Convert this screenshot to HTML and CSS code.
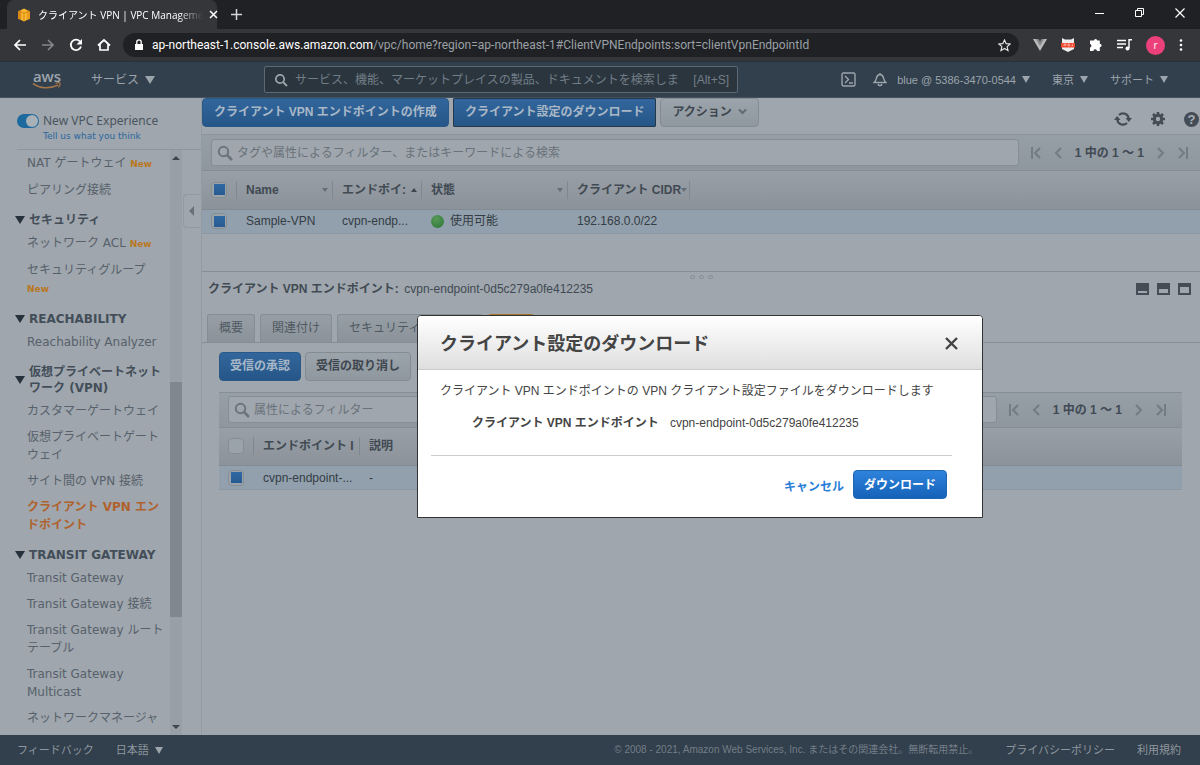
FILE: index.html
```html
<!DOCTYPE html>
<html lang="ja">
<head>
    <meta charset="UTF-8">
    <meta name="viewport" content="width=device-width, initial-scale=1.0">
    <title>クライアント VPN | VPC Management Console</title>
    <link rel="stylesheet" href="styles.css">
</head>
<body>

    <div class="browser">
        <div class="tab-bar">
            <div class="tab">
                <svg class="favicon" width="14" height="14" viewBox="0 0 14 14">
                    <path d="M1 3 4 2v10l-3-1z" fill="#d98a1a"/>
                    <path d="M4 2l3-1.500 3 1.500v10l-3 1.500-3-1.500z" fill="#f9b42d"/>
                    <path d="M10 2l3 1v8l-3 1z" fill="#e79a1e"/>
                    <path d="M1 3.500 7 5l6-1.500M7 5v8.500" stroke="#c9820f" fill="none" stroke-width=".8"/>
                </svg>
                <span class="tab-title">クライアント VPN | VPC Manageme</span>
                <button class="plain" aria-label="タブを閉じる">
                    <svg width="9" height="9" viewBox="0 0 9 9"><path d="M1 1l7 7M8 1l-7 7" stroke="#fff" stroke-width="1.500"/></svg>
                </button>
            </div>
            <button class="plain new-tab" aria-label="新しいタブ">
                <svg width="11" height="11" viewBox="0 0 11 11"><path d="M5.500 0v11M0 5.500h11" stroke="#d5d6d8" stroke-width="1.500"/></svg>
            </button>
            <div class="window-buttons">
                <button class="plain" aria-label="最小化"><svg width="10" height="10" viewBox="0 0 10 10"><path d="M0 5.500h9" stroke="#fff"/></svg></button>
                <button class="plain" aria-label="元に戻す"><svg width="10" height="10" viewBox="0 0 10 10"><path d="M.5 2.500h6v6h-6zM2.500 2.500v-2h6v6h-2" stroke="#fff" fill="none"/></svg></button>
                <button class="plain" aria-label="閉じる"><svg width="10" height="10" viewBox="0 0 10 10"><path d="M.5.5l9 9M9.500.5l-9 9" stroke="#fff" stroke-width="1.200"/></svg></button>
            </div>
        </div>
        <div class="toolbar">
            <button class="plain" aria-label="戻る"><svg width="14" height="12" viewBox="0 0 14 12"><path d="M13 6H2M7 1L2 6l5 5" stroke="#fff" stroke-width="1.700" fill="none"/></svg></button>
            <button class="plain" aria-label="進む"><svg width="14" height="12" viewBox="0 0 14 12"><path d="M1 6h11M7 1l5 5-5 5" stroke="#85868a" stroke-width="1.700" fill="none"/></svg></button>
            <button class="plain" aria-label="再読み込み"><svg width="14" height="14" viewBox="0 0 14 14"><path d="M12 8.500A5.200 5.200 0 1 1 10.800 3.300" stroke="#fff" stroke-width="1.800" fill="none"/><path d="M13 1v5.500H7.500z" fill="#fff"/></svg></button>
            <button class="plain" aria-label="ホーム"><svg width="14" height="14" viewBox="0 0 14 14"><path d="M1 7.500L7 2l6 5.500M3 6.500V12h8V6.500" stroke="#fff" stroke-width="1.700" fill="none"/></svg></button>
            <div class="address">
                <svg width="10" height="12" viewBox="0 0 10 12"><path d="M1 5h8v6H1z" fill="#fff"/><path d="M2.800 5V3a2.200 2.200 0 0 1 4.400 0v2" stroke="#fff" stroke-width="1.300" fill="none"/></svg>
                <span class="url"><b>ap-northeast-1.console.aws.amazon.com</b>/vpc/home?region=ap-northeast-1#ClientVPNEndpoints:sort=clientVpnEndpointId</span>
                <button class="plain" aria-label="ブックマーク"><svg width="13" height="13" viewBox="0 0 14 14"><path d="M7 1l1.800 4 4.200.4-3.200 2.800 1 4.300L7 10.200 3.200 12.500l1-4.300L1 5.400 5.200 5z" stroke="#e8e8e8" stroke-width="1.200" fill="none"/></svg></button>
            </div>
            <div class="extensions">
                <svg width="14" height="12" viewBox="0 0 14 12"><path d="M0 0h5l2 3.500L9 0h5L7 12z" fill="#b9b9b9"/><path d="M3 0h2.500L7 2.500 8.500 0H11L7 7z" fill="#85868a"/></svg>
                <svg width="14" height="14" viewBox="0 0 14 14"><path d="M1 0l3 1.500h6L13 0v11l-6 3-6-3z" fill="#eee"/><path d="M0 5h14v4.500H0z" fill="#f04a2e"/><path d="M3 8V6h2v1.200H3M7 8V6h1.500v2zM10.500 8h1V6" stroke="#fbb" fill="none" stroke-width=".7"/></svg>
                <svg width="14" height="14" viewBox="0 0 14 14"><path d="M5 2.500a1.600 1.600 0 0 1 3.200 0h2.600v3.200a1.800 1.800 0 0 1 0 3.600V13H8a1.800 1.800 0 0 0-3.600 0H1V9.500A1.800 1.800 0 0 0 1 6V2.500z" fill="#fff"/></svg>
                <svg width="15" height="12" viewBox="0 0 15 12"><path d="M0 1.500h9M0 5h9M0 8.500h6" stroke="#fff" stroke-width="1.500"/><path d="M12 9V.8h3" stroke="#fff" stroke-width="1.400" fill="none"/><circle cx="10.500" cy="9.500" r="2" fill="#fff"/></svg>
                <span class="avatar">r</span>
                <svg width="4" height="12" viewBox="0 0 4 12" fill="#fff"><circle cx="2" cy="1.500" r="1.300"/><circle cx="2" cy="6" r="1.300"/><circle cx="2" cy="10.500" r="1.300"/></svg>
            </div>
        </div>
    </div>

    <header class="aws-nav">
        <a href="#" class="logo" aria-label="aws">
            <span class="logo-text">aws</span>
            <svg width="30" height="8" viewBox="0 0 30 8"><path d="M1 1.500C8 6.800 18 7 26 3" stroke="#a3754a" stroke-width="1.600" fill="none"/><path d="M23.500 1.200c2-.6 4.200-.6 4.500.1s-.5 2.700-1.700 4" stroke="#a3754a" stroke-width="1.200" fill="none"/></svg>
        </a>
        <button class="plain services">サービス <span class="caret"></span></button>
        <label class="nav-search">
            <svg width="14" height="14" viewBox="0 0 14 14"><circle cx="6" cy="6" r="4.200" stroke="#9da5ac" stroke-width="1.700" fill="none"/><path d="M9 9l4 4" stroke="#9da5ac" stroke-width="1.800"/></svg>
            <input type="text" aria-label="検索" placeholder="サービス、機能、マーケットプレイスの製品、ドキュメントを検索します">
            <span>[Alt+S]</span>
        </label>
        <div class="nav-right">
            <button class="plain" aria-label="CloudShell"><svg width="15" height="15" viewBox="0 0 15 15" fill="none" stroke="#9da5ac" stroke-width="1.400"><rect x="1" y="1" width="13" height="13" rx="1.500"/><path d="M4 4l3.500 3.500L4 11M8 11h4"/></svg></button>
            <button class="plain" aria-label="通知"><svg width="14" height="15" viewBox="0 0 14 15" fill="none" stroke="#9da5ac" stroke-width="1.400"><path d="M7 1v1.500M1 10.500h12c-2-1.500-2-2.500-2.500-4.500C10 3.800 9 2.500 7 2.500S4 3.800 3.500 6C3 8 3 9 1 10.500zM5 12c.5 2.200 3.500 2.200 4 0"/></svg></button>
            <button class="plain account">blue @ 5386-3470-0544 <span class="caret small"></span></button>
            <button class="plain region">東京 <span class="caret small"></span></button>
            <button class="plain support">サポート <span class="caret small"></span></button>
        </div>
    </header>

    <div class="console">
        <aside class="sidebar">
            <div class="experience">
                <label class="switch"><input type="checkbox" checked> New VPC Experience</label>
                <a href="#">Tell us what you think</a>
            </div>
            <div class="side-body">
                <nav class="side-nav">
                    <a href="#">NAT ゲートウェイ <em>New</em></a>
                    <a href="#">ピアリング接続</a>
                    <h3>セキュリティ</h3>
                    <a href="#">ネットワーク ACL <em>New</em></a>
                    <a href="#">セキュリティグループ <em>New</em></a>
                    <h3>REACHABILITY</h3>
                    <a href="#">Reachability Analyzer</a>
                    <h3>仮想プライベートネットワーク (VPN)</h3>
                    <a href="#">カスタマーゲートウェイ</a>
                    <a href="#">仮想プライベートゲートウェイ</a>
                    <a href="#">サイト間の VPN 接続</a>
                    <a href="#" class="current">クライアント VPN エンドポイント</a>
                    <h3>TRANSIT GATEWAY</h3>
                    <a href="#">Transit Gateway</a>
                    <a href="#">Transit Gateway 接続</a>
                    <a href="#">Transit Gateway ルートテーブル</a>
                    <a href="#">Transit Gateway Multicast</a>
                    <a href="#">ネットワークマネージャ</a>
                </nav>
                <div class="scrollbar">
                    <span class="arrow-up"></span>
                    <span class="thumb"></span>
                    <span class="arrow-down"></span>
                </div>
                <button class="plain collapse" aria-label="メニューを閉じる"><span></span></button>
            </div>
        </aside>

        <main class="content">
            <div class="actions">
                <button class="btn primary">クライアント VPN エンドポイントの作成</button>
                <button class="btn primary pressed">クライアント設定のダウンロード</button>
                <button class="btn menu">アクション <svg width="9" height="7" viewBox="0 0 9 7"><path d="M1 1.500l3.500 3.500L8 1.500" stroke="#636b73" stroke-width="2.200" fill="none"/></svg></button>
                <div class="tools">
                    <button class="plain" aria-label="更新"><svg width="18" height="16" viewBox="0 0 18 16"><path d="M5 4A5.700 5.700 0 0 1 14.700 8M13 12A5.700 5.700 0 0 1 3.300 8" stroke="#444d56" stroke-width="2.200" fill="none"/><path d="M11.500 7H18l-3.200 4zM0 9h6.500L3.200 5z" fill="#444d56"/></svg></button>
                    <button class="plain" aria-label="設定"><svg width="14" height="14" viewBox="0 0 14 14"><circle cx="7" cy="7" r="3.700" stroke="#444d56" stroke-width="3" fill="none"/><path d="M7 0v3M7 11v3M0 7h3M11 7h3M2 2l2 2M10 10l2 2M2 12l2-2M10 4l2-2" stroke="#444d56" stroke-width="2.600"/></svg></button>
                    <button class="plain" aria-label="ヘルプ"><span class="help">?</span></button>
                </div>
            </div>

            <div class="filter">
                <label class="filter-box">
                    <svg width="16" height="16" viewBox="0 0 16 16"><circle cx="6.500" cy="6.500" r="4.700" stroke="#6c757d" stroke-width="2" fill="none"/><path d="M10 10l5 5" stroke="#6c757d" stroke-width="2.600"/></svg>
                    <input type="text" aria-label="フィルター" placeholder="タグや属性によるフィルター、またはキーワードによる検索">
                </label>
                <div class="pager">
                    <button class="plain" aria-label="最初"><svg width="10" height="12" viewBox="0 0 10 12"><path d="M1 0v12M9 1L4 6l5 5" /></svg></button>
                    <button class="plain" aria-label="前へ"><svg width="8" height="12" viewBox="0 0 8 12"><path d="M7 1L2 6l5 5"/></svg></button>
                    <b>1 中の 1 ～ 1</b>
                    <button class="plain" aria-label="次へ"><svg width="8" height="12" viewBox="0 0 8 12"><path d="M1 1l5 5-5 5"/></svg></button>
                    <button class="plain" aria-label="最後"><svg width="10" height="12" viewBox="0 0 10 12"><path d="M9 0v12M1 1l5 5-5 5"/></svg></button>
                </div>
            </div>
            <table class="grid">
                <colgroup><col class="c-check"><col class="c-name"><col class="c-id"><col class="c-state"><col class="c-cidr"><col></colgroup>
                <thead>
                    <tr>
                        <th><input type="checkbox" aria-label="すべて選択" checked></th>
                        <th><div>Name <i class="sort"></i></div></th>
                        <th><div>エンドポイ: <i class="sort up"></i></div></th>
                        <th><div>状態 <i class="sort"></i></div></th>
                        <th><div>クライアント CIDR <i class="sort"></i></div></th>
                        <th></th>
                    </tr>
                </thead>
                <tbody>
                    <tr>
                        <td><input type="checkbox" aria-label="Sample-VPN" checked></td>
                        <td>Sample-VPN</td>
                        <td>cvpn-endp...</td>
                        <td><span class="status"></span>使用可能</td>
                        <td>192.168.0.0/22</td>
                        <td></td>
                    </tr>
                </tbody>
            </table>

            <section class="detail">
                <div class="grip"><i></i><i></i><i></i></div>
                <div class="detail-head">
                    <h2>クライアント VPN エンドポイント: <span>cvpn-endpoint-0d5c279a0fe412235</span></h2>
                    <div class="panes">
                        <button class="plain pane low" aria-label="下"></button>
                        <button class="plain pane mid" aria-label="中"></button>
                        <button class="plain pane high" aria-label="上"></button>
                    </div>
                </div>
                <div class="tabs">
                    <button>概要</button>
                    <button>関連付け</button>
                    <button class="groups">セキュリティ</button>
                    <button class="active" aria-label="認証"></button>
                </div>
                <div class="tab-panel">
                    <div class="panel-actions">
                        <button class="btn primary">受信の承認</button>
                        <button class="btn">受信の取り消し</button>
                    </div>
                    <div class="filter">
                        <label class="filter-box">
                            <svg width="16" height="16" viewBox="0 0 16 16"><circle cx="6.500" cy="6.500" r="4.700" stroke="#6c757d" stroke-width="2" fill="none"/><path d="M10 10l5 5" stroke="#6c757d" stroke-width="2.600"/></svg>
                            <input type="text" aria-label="属性フィルター" placeholder="属性によるフィルター">
                        </label>
                        <div class="pager">
                            <button class="plain" aria-label="最初"><svg width="10" height="12" viewBox="0 0 10 12"><path d="M1 0v12M9 1L4 6l5 5" /></svg></button>
                            <button class="plain" aria-label="前へ"><svg width="8" height="12" viewBox="0 0 8 12"><path d="M7 1L2 6l5 5"/></svg></button>
                            <b>1 中の 1 ～ 1</b>
                            <button class="plain" aria-label="次へ"><svg width="8" height="12" viewBox="0 0 8 12"><path d="M1 1l5 5-5 5"/></svg></button>
                            <button class="plain" aria-label="最後"><svg width="10" height="12" viewBox="0 0 10 12"><path d="M9 0v12M1 1l5 5-5 5"/></svg></button>
                        </div>
                    </div>
                    <table class="grid">
                        <colgroup><col class="c-check"><col class="c-endpoint"><col></colgroup>
                        <thead>
                            <tr>
                                <th><input type="checkbox" aria-label="すべて選択"></th>
                                <th>エンドポイント I</th>
                                <th>説明</th>
                            </tr>
                        </thead>
                        <tbody>
                            <tr>
                                <td><input type="checkbox" aria-label="cvpn-endpoint" checked></td>
                                <td>cvpn-endpoint-...</td>
                                <td>-</td>
                            </tr>
                        </tbody>
                    </table>
                </div>
            </section>

            <div class="overlay">
                <div class="modal" role="dialog" aria-labelledby="modal-title">
                    <div class="modal-head">
                        <h1 id="modal-title">クライアント設定のダウンロード</h1>
                        <button class="plain" aria-label="閉じる"><svg width="13" height="13" viewBox="0 0 13 13"><path d="M1 1l11 11M12 1L1 12" stroke="#444" stroke-width="2.400"/></svg></button>
                    </div>
                    <div class="modal-body">
                        <p>クライアント VPN エンドポイントの VPN クライアント設定ファイルをダウンロードします</p>
                        <dl>
                            <dt>クライアント VPN エンドポイント</dt>
                            <dd>cvpn-endpoint-0d5c279a0fe412235</dd>
                        </dl>
                    </div>
                    <div class="modal-foot">
                        <a href="#">キャンセル</a>
                        <button class="btn primary">ダウンロード</button>
                    </div>
                </div>
            </div>
        </main>
    </div>

    <footer class="footer">
        <a href="#">フィードバック</a>
        <button class="plain">日本語 <span class="caret small"></span></button>
        <span class="copyright">© 2008 - 2021, Amazon Web Services, Inc. またはその関連会社。無断転用禁止。</span>
        <a href="#">プライバシーポリシー</a>
        <a href="#">利用規約</a>
    </footer>

</body>
</html>
```
FILE: styles.css
```css
* {
    box-sizing: border-box;
}
body {
    margin: 0;
    height: 100vh;
    display: flex;
    flex-direction: column;
    overflow: hidden;
    background: #9fa6ad;
    color: #414a53;
    font-family: "Liberation Sans", "Noto Sans CJK JP", sans-serif;
    font-size: 12px;
    line-height: 18px;
}
a {
    text-decoration: none;
}
button, input {
    font: inherit;
    color: inherit;
}
svg {
    display: block;
    flex: none;
}
.plain {
    display: flex;
    align-items: center;
    padding: 0;
    border: 0;
    background: none;
    white-space: nowrap;
}

/* browser window */
.browser {
    flex: none;
    background: #35363a;
    color: #fff;
    font-family: "Open Sans", "Noto Sans CJK JP", sans-serif;
    border-bottom: 1px solid #29303a;
}
.tab-bar {
    display: flex;
    align-items: center;
    height: 29px;
    padding-left: 7px;
    background: #202124;
}
.tab {
    display: flex;
    align-items: center;
    width: 210px;
    height: 29px;
    padding: 0 9px 0 10px;
    border-radius: 7px 7px 0 0;
    background: #35363a;
}
.tab-title {
    flex: 1;
    margin: 0 6px 0 7px;
    white-space: nowrap;
    font-size: 10px;
    mask-image: linear-gradient(to right, #000 85%, transparent);
}
.new-tab {
    margin-left: 14px;
}
.window-buttons {
    display: flex;
    gap: 30px;
    margin-left: auto;
    padding: 0 15px 4px 0;
}
.toolbar {
    display: flex;
    align-items: center;
    gap: 14px;
    height: 32px;
    padding: 0 17px 0 13px;
}
.address {
    flex: 1;
    display: flex;
    align-items: center;
    height: 24px;
    margin-left: -2px;
    padding: 0 8px 0 11px;
    border-radius: 12px;
    background: #202124;
}
.url {
    flex: 1;
    margin-left: 8px;
    font-family: Roboto, sans-serif;
    color: #9aa0a6;
}
.url b {
    color: #fff;
    font-weight: normal;
}
.extensions {
    display: flex;
    align-items: center;
    gap: 14px;
}
.avatar {
    width: 19px;
    height: 19px;
    border-radius: 50%;
    background: #ec407a;
    font-size: 10px;
    text-align: center;
}

/* console header */
.aws-nav {
    flex: none;
    display: flex;
    align-items: center;
    height: 36px;
    padding: 0 32px;
    background: #323f4c;
    border-bottom: 1px solid #46525e;
    color: #9da5ac;
}
.logo {
    width: 30px;
    color: inherit;
}
.logo-text {
    display: block;
    line-height: 12px;
    font-family: "Open Sans", sans-serif;
    font-size: 15px;
    font-weight: 600;
    text-align: center;
}
.services {
    margin-left: 29px;
}
.caret {
    margin-left: 6px;
    border: 5px solid transparent;
    border-top: 8px solid #9da5ac;
    border-bottom: 0;
}
.caret.small {
    border-width: 4px;
    border-top-width: 7px;
    border-bottom: 0;
}
.nav-search {
    display: flex;
    align-items: center;
    flex: 0 1 474px;
    height: 27px;
    margin-left: 109px;
    padding: 0 8px 0 9px;
    border: 1px solid #5c6873;
    border-radius: 2px;
    background: #2b353e;
    color: #717d87;
}
.nav-search input {
    flex: 1;
    min-width: 0;
    margin: 0 14px 0 7px;
    padding: 0;
    border: 0;
    background: none;
}
input::placeholder {
    color: inherit;
    opacity: 1;
}
.nav-right {
    display: flex;
    align-items: center;
    margin-left: auto;
    font-size: 11px;
}
.nav-right button + button {
    margin-left: 17px;
}
.nav-right .account {
    margin-left: 10px;
}
.nav-right .region,
.nav-right .support {
    margin-left: 22px;
}

.console {
    flex: 1;
    min-height: 0;
    display: flex;
}

/* side menu */
.sidebar {
    flex: none;
    display: flex;
    flex-direction: column;
    width: 202px;
    border-right: 1px solid #929aa2;
    font-family: "DejaVu Sans", "Noto Sans CJK JP", sans-serif;
}
.experience {
    height: 52px;
    margin-left: 17px;
    padding-top: 14px;
    border-bottom: 1px solid #8d959d;
    color: #4a5560;
}
.experience a {
    display: block;
    margin-left: 26px;
    line-height: 12px;
    font-size: 9px;
    color: #2b679d;
}
.switch {
    display: flex;
    align-items: center;
    gap: 4px;
    font-family: "Noto Sans", sans-serif;
}
.switch input {
    appearance: none;
    display: flex;
    justify-content: flex-end;
    width: 22px;
    height: 14px;
    margin: 0;
    padding: 1px;
    border-radius: 7px;
    background: #1d6b9e;
}
.switch input::before {
    content: "";
    width: 12px;
    height: 12px;
    border-radius: 50%;
    background: #a8b0b8;
}
.side-body {
    flex: 1;
    min-height: 0;
    display: flex;
}
.side-nav {
    width: 171px;
    padding: 4px 2px 0 27px;
    overflow: hidden;
}
.side-nav a {
    display: block;
    margin-bottom: 8px;
    color: #57616b;
}
.side-nav em {
    font-size: 9px;
    font-style: normal;
    font-weight: bold;
    color: #b9771f;
}
.side-nav a.current {
    color: #b0622c;
    font-weight: bold;
}
.side-nav h3 {
    display: flex;
    align-items: center;
    margin: 13px 0 6px -12px;
    font-size: 12px;
    line-height: 16px;
    color: #434e59;
}
.side-nav h3::before {
    content: "";
    flex: none;
    margin-right: 4px;
    border: 5px solid transparent;
    border-top: 8px solid #27313b;
    border-bottom: 0;
}
.scrollbar {
    display: flex;
    flex-direction: column;
    align-items: center;
    width: 12px;
    padding: 6px 0;
    background: #989fa6;
}
.arrow-up {
    border: 4px solid transparent;
    border-bottom-color: #3e464d;
    border-top: 0;
}
.arrow-down {
    margin-top: auto;
    border: 4px solid transparent;
    border-top-color: #3e464d;
    border-bottom: 0;
}
.thumb {
    width: 12px;
    height: 41%;
    margin-top: 222px;
    background: #80878e;
}
.collapse {
    width: 18px;
    height: 34px;
    margin: 44px 0 0 1px;
    padding-left: 5px;
    border: 1px solid #929aa2;
    border-right: 0;
    border-radius: 4px 0 0 4px;
}
.collapse span {
    border: 5px solid transparent;
    border-right-color: #68717a;
    border-left: 0;
}

/* main area */
.content {
    position: relative;
    flex: 1;
    min-width: 0;
    display: flex;
    flex-direction: column;
    overflow: hidden;
}
.actions {
    display: flex;
    align-items: flex-start;
    gap: 4px;
    height: 37px;
    border-bottom: 1px solid #8b939b;
}
.btn {
    height: 29px;
    padding: 0 10px;
    border: 1px solid #838b93;
    border-radius: 4px;
    background: linear-gradient(#9ca4ab, #8f979f);
    color: #3e474f;
    font-size: 12px;
    font-weight: bold;
    white-space: nowrap;
}
.btn.primary {
    border-color: #295988;
    background: linear-gradient(#32669c, #265688);
    color: #a9b8c7;
}
.actions .btn {
    padding: 0 11px 2px;
}
.btn.primary.pressed {
    border-color: #25384b;
    border-radius: 1px;
}
.btn.menu {
    display: flex;
    align-items: center;
    gap: 6px;
}
.tools {
    display: flex;
    align-items: center;
    gap: 19px;
    margin: 13px 1px 0 auto;
}
.help {
    width: 15px;
    height: 15px;
    border-radius: 50%;
    background: #444d56;
    color: #a9b0b6;
    font-size: 13px;
    font-weight: bold;
    line-height: 15px;
}
.filter {
    display: flex;
    align-items: center;
    height: 36px;
    padding: 0 12px 0 9px;
    background: linear-gradient(#969ea6, #8e969e);
    border-bottom: 1px solid #858d95;
}
.filter-box {
    flex: 1;
    display: flex;
    align-items: center;
    gap: 4px;
    height: 27px;
    padding: 0 5px;
    border: 1px solid #858d95;
    border-radius: 3px;
    background: #9fa6ad;
    color: #69727a;
}
.filter-box input {
    flex: 1;
    min-width: 0;
    padding: 0;
    border: 0;
    background: none;
}
.pager {
    display: flex;
    align-items: center;
    gap: 13px;
    margin-left: 12px;
}
.pager path {
    fill: none;
    stroke: #737b83;
    stroke-width: 2;
}
.grid {
    width: 100%;
    table-layout: fixed;
    border-collapse: collapse;
}
.grid th, .grid td {
    padding: 0 0 0 9px;
    text-align: left;
    white-space: nowrap;
}
.grid thead {
    background: linear-gradient(#989fa6, #8b9299);
}
.grid th {
    height: 38px;
    border-bottom: 1px solid #828a92;
    background: linear-gradient(#7f878f, #7f878f) right center / 1px 18px no-repeat;
}
.grid th:last-child {
    background: none;
}
.grid th div {
    display: flex;
    align-items: center;
    justify-content: space-between;
    padding-right: 5px;
}
.grid td {
    height: 24px;
    border-bottom: 1px solid #8b97a3;
    background: #92a0ad;
    color: #343c44;
}
.sort {
    flex: none;
    border: 3px solid transparent;
    border-top: 4px solid #656e76;
    border-bottom: 0;
}
.sort.up {
    border-top: 0;
    border-bottom: 4px solid #3e474f;
}
.grid input {
    appearance: none;
    display: block;
    width: 16px;
    height: 16px;
    margin: 0;
    border: 1px solid #858d95;
    border-radius: 4px;
    background: #9ba3aa;
}
.grid input:checked {
    background: linear-gradient(#2f68a3, #275a91) center / 11px 11px no-repeat #9ba3aa;
}
.c-check {
    width: 35px;
}
.c-name {
    width: 96px;
}
.c-id {
    width: 89px;
}
.c-state {
    width: 146px;
}
.c-cidr {
    width: 122px;
}
.c-endpoint {
    width: 106px;
}
.status {
    display: inline-block;
    width: 13px;
    height: 13px;
    margin-right: 6px;
    border-radius: 50%;
    vertical-align: middle;
    background: radial-gradient(circle at 40% 30%, #579a57, #2b7434);
}

/* detail */
.detail {
    margin-top: 37px;
    border-top: 1px solid #868e96;
}
.grip {
    display: flex;
    justify-content: center;
    gap: 4px;
    height: 4px;
    margin-top: 3px;
}
.grip i {
    width: 5px;
    border: 1px solid #878f97;
    border-radius: 2px;
}
.detail-head {
    display: flex;
    align-items: center;
    justify-content: space-between;
    margin-top: 1px;
    padding: 0 9px 0 6px;
}
.detail-head h2 {
    margin: 0;
    font-size: 12px;
}
.detail-head h2 span {
    margin-left: 2px;
    font-weight: normal;
}
.panes {
    display: flex;
    gap: 8px;
}
.pane {
    width: 13px;
    height: 12px;
    border: 2px solid #444d56;
    background: #9fa6ad;
}
.pane.low {
    border-top-width: 8px;
}
.pane.mid {
    border-top-width: 6px;
}
.pane.high {
    border-top-width: 4px;
}
.tabs {
    display: flex;
    gap: 5px;
    margin-top: 16px;
    padding-left: 5px;
    border-bottom: 1px solid #858d95;
}
.tabs button {
    height: 28px;
    padding: 0 11px;
    border: 1px solid #858d95;
    border-bottom: 0;
    border-radius: 3px 3px 0 0;
    background: linear-gradient(#979fa6, #8b9299);
    color: #4f5962;
}
.tabs .groups {
    width: 146px;
    text-align: left;
}
.tabs .active {
    width: 46px;
    border-top: 2px solid #a8742a;
    background: #9fa6ad;
}
.tab-panel {
    padding: 9px 18px 0 17px;
}
.panel-actions {
    display: flex;
    gap: 4px;
    margin-bottom: 11px;
}
.tab-panel .filter {
    padding-right: 16px;
    border-top: 1px solid #858d95;
}

/* download dialog */
.overlay {
    position: absolute;
    inset: 0;
    display: flex;
    align-items: center;
    justify-content: center;
    padding-right: 2px;
}
.modal {
    width: 566px;
    max-width: 90%;
    border: 1px solid #333;
    border-radius: 4px 4px 0 0;
    overflow: hidden;
    background: #fff;
    color: #444;
}
.modal-head {
    display: flex;
    align-items: center;
    justify-content: space-between;
    height: 54px;
    padding: 2px 24px 0 22px;
    border-bottom: 1px solid #ccc;
    background: linear-gradient(#fff, #dfdfdf);
}
.modal-head h1 {
    margin: 0;
    font-size: 18px;
}
.modal-body {
    margin: 0 30px 0 13px;
    padding: 12px 0 23px 9px;
    border-bottom: 1px solid #ccc;
}
.modal-body p {
    margin: 0;
    white-space: nowrap;
}
.modal-body dl {
    display: flex;
    gap: 11px;
    margin: 14px 0 0 32px;
}
.modal-body dt {
    font-weight: bold;
}
.modal-body dd {
    margin: 0;
}
.modal-foot {
    display: flex;
    align-items: center;
    justify-content: flex-end;
    gap: 9px;
    padding: 14px 35px 18px;
}
.modal-foot a {
    padding-top: 5px;
    color: #2a80d8;
    font-weight: bold;
}
.modal-foot .btn {
    border-color: #1f66b0;
    background: linear-gradient(#2f83dc, #1562b8);
    color: #fff;
}

.footer {
    flex: none;
    display: flex;
    align-items: center;
    gap: 22px;
    height: 30px;
    padding: 0 19px 0 17px;
    background: #323f4c;
    color: #8e979f;
    font-size: 11px;
}
.footer a {
    color: inherit;
}
.copyright {
    margin: 0 5px 0 auto;
    color: #737e88;
    font-size: 10px;
}
```
